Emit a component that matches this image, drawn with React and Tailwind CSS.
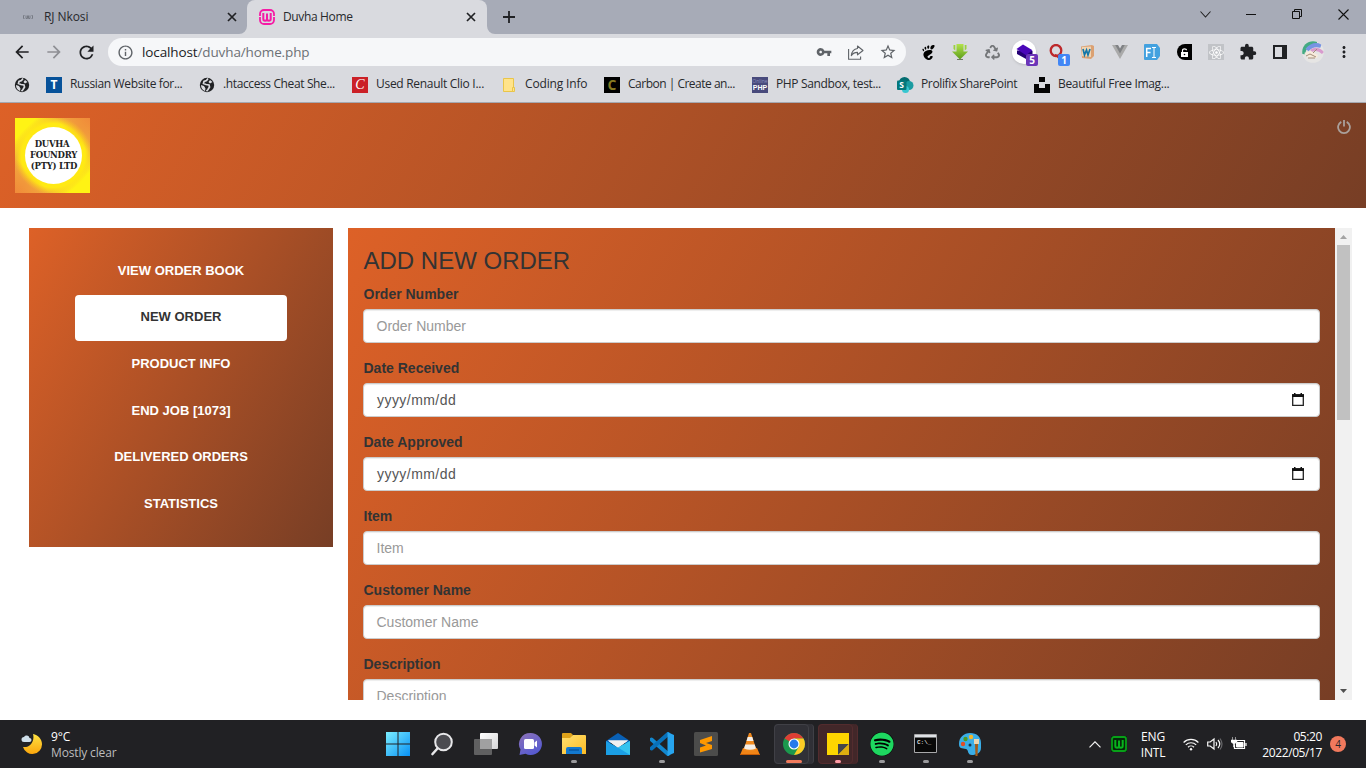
import React from "react";
import {
  MdArrowBack, MdArrowForward, MdRefresh, MdInfoOutline, MdVpnKey, MdStarBorder,
  MdExtension, MdMoreVert,
} from "react-icons/md";
import { FaSpotify, FaRecycle, FaReact } from "react-icons/fa";
import { SiGnome } from "react-icons/si";

const GRADIENT = "bg-[linear-gradient(120deg,#dd6127,#773e25)]";

function WampMark({ stroke, inner, size, radius = 4, notch = true }) {
  return (
    <svg width={size} height={size} viewBox="0 0 16 16" fill="none">
      <rect x="1" y="1" width="14" height="14" rx={radius} stroke={stroke} strokeWidth="1.8" />
      <path d="M4.300 4v6q0 1.700 1.800 1.700T8 10V4.500M8 10q0 1.700 1.900 1.700T11.700 10V4" stroke={inner} strokeWidth="2" />
      {notch && <path d="M0 7.500h2.200M13.800 7.500H16" stroke="#e6dce4" strokeWidth="1" />}
    </svg>
  );
}

function Globe() {
  return (
    <svg width="16" height="16" viewBox="0 0 16 16">
      <circle cx="8" cy="8" r="7.200" fill="#202124" />
      <path d="M9 1.500L7.500 3.500 5 4.500 4.500 6.500 7 7.500 10 8 10.500 10 9 12.500 7.500 14.300" fill="none" stroke="#d9dadf" strokeWidth="1.700" />
      <path d="M2 8l3 1 1.500 2.500-.5 2.500A6.300 6.300 0 0 1 2 8M11 3l2.500 2-2.500 1.500L9.500 5z" fill="#d9dadf" />
    </svg>
  );
}

function CloseIcon() {
  return (
    <svg width="10" height="10" viewBox="0 0 10 10" stroke="#202124" strokeWidth="1.700">
      <path d="M1 1l8 8M9 1L1 9" />
    </svg>
  );
}

function TabStrip() {
  return (
    <div className="flex h-[34px] bg-[#a7abb7] text-[#27292d]">
      <div className="flex w-[247px] items-center pl-[23px] pr-[10px]">
        <svg width="10" height="5" viewBox="0 0 10 5" fill="none" stroke="#777b84" strokeWidth="1">
          <path d="M1.500.500h-1v3h1M3 .500v3h1.500v-3M5.500 .500v3H7v-3M8.500.500h1v3h-1" />
        </svg>
        <span className="ml-[11px] flex-1 whitespace-nowrap text-[12px] tracking-[-0.080px]">RJ Nkosi</span>
        <CloseIcon />
      </div>
      <div className="relative flex w-[240px] items-center rounded-t-lg bg-[#d9dadf] pl-3 pr-4">
        <svg className="absolute bottom-0 left-[-8px]" width="8" height="8"><path d="M8 0v8H0a8 8 0 0 0 8-8" fill="#d9dadf" /></svg>
        <svg className="absolute bottom-0 right-[-8px]" width="8" height="8"><path d="M0 0v8h8a8 8 0 0 1-8-8" fill="#d9dadf" /></svg>
        <WampMark stroke="#f51ba5" inner="#f51ba5" size={16} />
        <span className="ml-2 flex-1 whitespace-nowrap text-[12px] tracking-[-0.350px]">Duvha Home</span>
        <span className="-mr-[5px]"><CloseIcon /></span>
      </div>
      <div className="flex w-11 items-center justify-center">
        <svg width="12" height="12" stroke="#202124" strokeWidth="1.800"><path d="M6 0v12M0 6h12" /></svg>
      </div>
      <div className="ml-auto flex h-7 items-center text-black">
        <div className="flex w-[46px] justify-center">
          <svg width="11" height="7" fill="none" stroke="#222" strokeWidth="1.100"><path d="M.5.500l5 5.500 5-5.500" /></svg>
        </div>
        <div className="flex w-[46px] justify-center">
          <svg width="10" height="1"><rect width="10" height="1" fill="#111" /></svg>
        </div>
        <div className="flex w-[46px] justify-center">
          <svg width="10" height="10" fill="none" stroke="#111"><path d="M.5 2.500h7v7h-7zM2.500 2.500v-2h7v7h-2" /></svg>
        </div>
        <div className="flex w-[46px] justify-center">
          <svg width="11" height="11" stroke="#111" strokeWidth="1.100"><path d="M.5.500l10 10M10.500.500l-10 10" /></svg>
        </div>
      </div>
    </div>
  );
}

function Cell({ children }) {
  return <div className="relative flex h-8 w-8 shrink-0 items-center justify-center">{children}</div>;
}

function Toolbar() {
  return (
    <div className="flex h-9 items-center bg-[#d9dadf] pl-[6px] text-[#202124]">
      <Cell><MdArrowBack size={20} /></Cell>
      <Cell><MdArrowForward size={20} className="text-[#8e8f94]" /></Cell>
      <Cell><MdRefresh size={21} /></Cell>
      <div className="ml-[6px] flex h-7 w-[798px] items-center rounded-full bg-[#f6f7f9] text-[#5f6368]">
        <MdInfoOutline size={17} className="ml-[9px]" />
        <span className="ml-2 flex-1 whitespace-nowrap text-[13.500px] tracking-[-0.120px] text-[#6c7075]">
          <span className="text-[#202124]">localhost</span>/duvha/home.php
        </span>
        <div className="flex w-8 justify-center"><MdVpnKey size={16} /></div>
        <div className="flex w-8 justify-center">
          <svg width="16" height="15" viewBox="0 0 16 15" fill="none" stroke="#5f6368" strokeWidth="1.100">
            <path d="M.6 4v10.200h12V11.500" />
            <path d="M9.500 1l5.500 4.500-5.500 4.300V7.400C6.500 7.400 4.800 8.300 3.300 10.600 3.800 6.500 6 4 9.500 3.500z" strokeLinejoin="round" />
          </svg>
        </div>
        <div className="mr-[2px] flex w-8 justify-center"><MdStarBorder size={18} /></div>
      </div>
      <div className="ml-[6px] flex items-center">
        <Cell><SiGnome size={15} className="text-black" /></Cell>
        <Cell>
          <svg width="16" height="16" viewBox="0 0 16 16">
            <defs><linearGradient id="dl" x2="0" y2="1"><stop stopColor="#b3e34a" /><stop offset="1" stopColor="#5b9c1b" /></linearGradient></defs>
            <path d="M4.500 0h7v7.500H16L8 15.500 0 7.500h4.500z" fill="url(#dl)" />
            <path d="M1.500 1h1.800v5.500L1.500 5zM14.500 1h-1.800v5.500L14.500 5z" fill="#9bd13f" />
            <path d="M5 15.500h6" stroke="#6d7a60" />
          </svg>
        </Cell>
        <Cell><FaRecycle size={15} className="text-[#747679]" /></Cell>
        <Cell>
          <div className="flex h-6 w-6 items-center justify-center rounded-full bg-white shadow">
            <svg width="17" height="16" viewBox="0 0 17 16">
              <path d="M1 6.500v3.500L11 15.500l5.500-4V7z" fill="#240075" />
              <path d="M7 .500l9.500 5.800-6.500 5L.500 5z" fill="#4a07b8" />
            </svg>
          </div>
          <span className="absolute left-[18px] top-[18px] flex h-3 w-3 items-center justify-center rounded-[2px] bg-[#6b35b8] text-[10px] font-bold text-white">5</span>
        </Cell>
        <Cell>
          <svg width="15" height="16" viewBox="0 0 15 16" fill="none" stroke="#bd282b">
            <ellipse cx="7" cy="6.500" rx="5.300" ry="5.500" strokeWidth="2.300" /><path d="M6 11q2 0 3 2t4 1.500" strokeWidth="2" />
          </svg>
          <span className="absolute left-[18px] top-[18px] flex h-3 w-3 items-center justify-center rounded-[2px] bg-[#4286f5] text-[10px] font-bold text-white">1</span>
        </Cell>
        <Cell>
          <svg width="14" height="14" viewBox="0 0 14 14">
            <path d="M0 1.500L11 0l2 1v10l-3 3-9-1z" fill="#dba173" /><path d="M1 2l9-.5V12L1 11z" fill="#f0d4b2" />
            <path d="M2 4l1.500 6L5.500 5 7 10l2-6" fill="none" stroke="#1477a9" strokeWidth="1.700" />
          </svg>
        </Cell>
        <Cell>
          <svg width="16" height="14" viewBox="0 0 16 14"><path d="M0 0h4l4 7 4-7h4L8 14z" fill="#aaa" /><path d="M3.200 0H6l2 3.500L10 0h2.800L8 8.500z" fill="#808285" /></svg>
        </Cell>
        <Cell>
          <svg width="16" height="16" viewBox="0 0 16 16" fill="none" stroke="#fff">
            <path d="M0 1q0-1 1-1h12l3 4v8l-3 4H1q-1 0-1-1z" fill="#43a1df" stroke="none" />
            <path d="M2.700 13V4.500H7M2.700 8.500h3.800" strokeWidth="1.500" /><path d="M8 3.500h4M8 13.500h4M10 3.500v10" />
          </svg>
        </Cell>
        <Cell>
          <div className="flex h-4 w-[15px] items-center justify-center rounded-l-full bg-black">
            <svg width="7" height="9" viewBox="0 0 7 9"><path d="M0 4h7v5H0z" fill="#fff" /><path d="M1.500 4V2.500q0-1.700 2-1.700t2 1.500" fill="none" stroke="#fff" strokeWidth="1.200" /><circle cx="3.500" cy="6.500" r=".8" /></svg>
          </div>
        </Cell>
        <Cell>
          <div className="flex h-4 w-4 items-center justify-center bg-[#c1c3c7] text-white"><FaReact size={15} /></div>
        </Cell>
        <Cell><MdExtension size={18} /></Cell>
        <Cell>
          <svg width="14" height="14"><rect x="1" y="1" width="12" height="12" fill="none" stroke="#202124" strokeWidth="2" /><path d="M9 0h5v14H9z" fill="#202124" /></svg>
        </Cell>
        <div className="flex w-[34px] justify-center">
          <svg width="22" height="22" viewBox="0 0 22 22">
            <defs><clipPath id="av"><circle cx="11" cy="11" r="10.800" /></clipPath></defs>
            <g clipPath="url(#av)" fill="none">
              <path d="M0 0h22v22H0z" fill="#e6e5e4" />
              <path d="M0 13C1 4 8 1 15 1" stroke="#43aa83" strokeWidth="6" />
              <path d="M5 9q6-7 14-4" stroke="#7794e3" strokeWidth="4" />
              <path d="M9 10q6-4 12 2" stroke="#d89bce" strokeWidth="3" />
              <path d="M2 12l7-2 7 4-1 3H6l-1-3z" fill="#f7ebdc" />
              <path d="M4 15l4-2 6 3M11 12l4-4M6 17h7" stroke="#a48e79" strokeWidth="1" />
            </g>
          </svg>
        </div>
        <div className="flex w-7 justify-center"><MdMoreVert size={18} /></div>
      </div>
    </div>
  );
}

function Bookmark({ width, icon, gap = "gap-2", track = "tracking-[-0.350px]", children }) {
  return (
    <div className={`flex shrink-0 items-center whitespace-nowrap ${width} ${gap}`}>
      {icon}
      <span className={`-mt-px ${track}`}>{children}</span>
    </div>
  );
}

function Bookmarks() {
  return (
    <div className="flex h-[33px] items-center border-b border-[#a5a8b0] bg-[#d9dadf] pb-[3px] pl-[14px] text-[12px] text-[#27292d]">
      <Bookmark width="w-8" icon={<Globe />} />
      <Bookmark width="w-[153px]" icon={<span className="flex h-4 w-4 items-center justify-center bg-[#07529a] text-[12px] font-bold text-white">T</span>}>Russian Website for...</Bookmark>
      <Bookmark width="w-[153px]" track="tracking-[-0.380px]" icon={<Globe />}>.htaccess Cheat She...</Bookmark>
      <Bookmark width="w-[150px]" track="tracking-[-0.290px]" icon={<span className="flex h-4 w-4 items-center justify-center bg-[#cb2027] font-['Liberation_Serif',serif] text-[14px] italic text-white">C</span>}>Used Renault Clio I...</Bookmark>
      <Bookmark
        width="w-[102px]"
        gap="gap-[9px]"
        track="tracking-[-0.160px]"
        icon={<svg width="14" height="16" fill="#ffe38a" stroke="#e9c549"><path d="M1.500 1.500h10v13h-10z" /><path d="M10.500 10.500h2v4h-2z" /></svg>}
      >Coding Info</Bookmark>
      <Bookmark width="w-[148px]" track="tracking-[-0.500px]" icon={<span className="flex h-4 w-4 items-center justify-center bg-black text-[14px] font-bold text-[#857a22]">C</span>}>Carbon | Create an...</Bookmark>
      <Bookmark
        width="w-[145px]"
        icon={
          <span className="flex h-4 w-4 flex-col items-center justify-center overflow-hidden bg-[#484a7c]">
            <span className="text-[5px] leading-[6px] text-[#8a8dbd]">Online</span>
            <span className="font-['Liberation_Sans',sans-serif] text-[7px] leading-[7px] font-bold text-white">PHP</span>
          </span>
        }
      >PHP Sandbox, test...</Bookmark>
      <Bookmark
        width="w-[137px]"
        gap="gap-[7px]"
        track="tracking-[-0.370px]"
        icon={
          <svg width="17" height="16" viewBox="0 0 17 16">
            <circle cx="7.500" cy="5.500" r="5.500" fill="#036c70" /><circle cx="12" cy="8.500" r="4.500" fill="#1a9ba1" /><circle cx="8.500" cy="12.500" r="3.500" fill="#37c6d0" />
            <rect y="3.500" width="9.500" height="9.500" rx="1" fill="#03787c" />
            <text x="4.700" y="11.300" textAnchor="middle" fontSize="8.500" fontWeight="700" fill="#fff" fontFamily="Open Sans">S</text>
          </svg>
        }
      >Prolifix SharePoint</Bookmark>
      <Bookmark width="w-[140px]" track="tracking-[-0.310px]" icon={<svg width="16" height="16"><path d="M5 0h6v5H5zM0 7h5v4h6V7h5v9H0z" fill="#050505" /></svg>}>Beautiful Free Imag...</Bookmark>
    </div>
  );
}

function CompanyLogo() {
  return (
    <div className="flex h-[75px] w-[75px] items-center justify-center bg-[radial-gradient(circle_at_51%_50%,#fff20f_0,#ffe914_32px,transparent_39px),linear-gradient(135deg,#fff314_14%,#f2b03c_27%,#f2a33c_50%,#f2b03c_73%,#fff314_86%)]">
      <div className="flex h-[75px] w-[75px] items-center justify-center bg-[linear-gradient(45deg,#f08a3a_0%,transparent_24%,transparent_76%,#f08a3a_100%)]">
        <div className="ml-[2px] flex h-[57px] w-[57px] flex-col items-center justify-center whitespace-nowrap rounded-full bg-white font-['DejaVu_Serif',serif] text-[8.500px] leading-[10.700px] font-bold tracking-[-0.270px] text-[#222]">
          <span className="-ml-[3px]">DUVHA</span>
          <span>FOUNDRY</span>
          <span className="ml-px">(PTY) LTD</span>
        </div>
      </div>
    </div>
  );
}

function AppHeader() {
  return (
    <header className={`flex h-[105px] items-start justify-between p-[15px] ${GRADIENT}`}>
      <CompanyLogo />
      <svg className="mt-[2px]" width="14" height="14" viewBox="0 0 14 14" fill="none" stroke="#aaa09b" strokeWidth="1.800">
        <path d="M4.300 1.900a5.900 5.900 0 1 0 5.400 0M7 0v6.500" />
      </svg>
    </header>
  );
}

const NAV = ["VIEW ORDER BOOK", "NEW ORDER", "PRODUCT INFO", "END JOB [1073]", "DELIVERED ORDERS", "STATISTICS"];

function SideNav() {
  return (
    <nav className={`flex h-[319px] w-[304px] shrink-0 flex-col items-center gap-[0.600px] pt-5 ${GRADIENT}`}>
      {NAV.map((label) => (
        <a
          key={label}
          className={`flex h-[46px] w-[212px] shrink-0 items-center justify-center rounded pb-px font-['Liberation_Sans',sans-serif] text-[13px] font-bold ${
            label === "NEW ORDER" ? "bg-white text-[#333]" : "text-white"
          }`}
        >
          {label}
        </a>
      ))}
    </nav>
  );
}

const FIELDS = [
  { label: "Order Number" },
  { label: "Date Received", date: true },
  { label: "Date Approved", date: true },
  { label: "Item" },
  { label: "Customer Name" },
  { label: "Description" },
];

function Field({ label, date }) {
  return (
    <div className="mb-[15px]">
      <div className="mb-[5px] pl-[0.500px] text-[14px] leading-5 font-bold">{label}</div>
      <div className="flex h-[34px] items-center justify-between rounded border border-[#ccc] bg-white px-3 text-[14px] shadow-[inset_0_1px_1px_rgba(0,0,0,0.075)]">
        {date ? <span className="pl-px tracking-[0.450px] text-[#555]">yyyy/mm/dd</span> : <span className="pl-[0.500px] text-[#999]">{label}</span>}
        {date && (
          <svg className="mr-[3px] mb-px" width="12" height="13" viewBox="0 0 12 13">
            <path d="M.7 2h10.600v10.300H.700z" fill="none" stroke="#222" strokeWidth="1.300" />
            <path d="M0 1.200h12V4H0zM2 0h1.500v2H2zM8.500 0H10v2H8.500z" fill="#111" />
          </svg>
        )}
      </div>
    </div>
  );
}

function OrderForm() {
  return (
    <main className="flex h-[472px] w-[1004px] overflow-hidden font-['Liberation_Sans',sans-serif] text-[#333]">
      <section className={`w-[987px] overflow-hidden px-[15px] ${GRADIENT}`}>
        <h3 className="mt-5 mb-[10px] pl-[0.500px] text-[24px] leading-[26.400px]">ADD NEW ORDER</h3>
        {FIELDS.map((f) => <Field key={f.label} {...f} />)}
      </section>
      <div className="flex w-[17px] flex-col items-center bg-[#f1f1f1]">
        <div className="flex h-[17px] items-center"><svg width="7" height="4"><path d="M0 4l3.500-4L7 4z" fill="#a3a3a3" /></svg></div>
        <div className="h-[175px] w-[13px] bg-[#c1c1c1]" />
        <div className="mt-auto flex h-[17px] items-center pb-px"><svg width="7" height="4"><path d="M0 0l3.500 4L7 0z" fill="#505050" /></svg></div>
      </div>
    </main>
  );
}

function TaskCell({ children, dot, tile }) {
  return (
    <div className="relative flex h-12 w-11 shrink-0 items-center justify-center">
      {tile && <div className={`absolute left-[2px] top-1 h-10 w-10 rounded border-r ${tile}`} />}
      {tile && <div className={`absolute left-[2px] top-1 h-10 w-[35px] rounded border ${tile}`} />}
      <div className="relative">{children}</div>
      {dot && <div className={`absolute top-10 left-1/2 h-[3px] -translate-x-1/2 rounded-full ${dot}`} />}
    </div>
  );
}

const GREY_DOT = "w-[6px] bg-[#9a9a9d]";

function TaskApps() {
  return (
    <div className="flex">
      <TaskCell>
        <svg width="24" height="24" viewBox="0 0 24 24">
          <defs><linearGradient id="win" x2="1" y2="1"><stop stopColor="#7beeff" /><stop offset="1" stopColor="#0890f4" /></linearGradient></defs>
          <path d="M0 0h11.500v11.500H0zM12.500 0H24v11.500H12.500zM0 12.500h11.500V24H0zM12.500 12.500H24V24H12.500z" fill="url(#win)" />
        </svg>
      </TaskCell>
      <TaskCell>
        <svg width="24" height="24" viewBox="0 0 24 24" fill="none" stroke="#e7e7e9">
          <circle cx="13.500" cy="10" r="8.300" fill="#4b4b50" strokeWidth="2" /><path d="M7.500 16.500L2.500 22" strokeWidth="2.600" strokeLinecap="round" />
        </svg>
      </TaskCell>
      <TaskCell>
        <svg width="24" height="24" viewBox="0 0 24 24">
          <defs><linearGradient id="tv" x2="1" y2="1"><stop stopColor="#fff" /><stop offset="1" stopColor="#d5d5d7" /></linearGradient></defs>
          <rect x="6" y="1" width="18" height="16" rx="1" fill="url(#tv)" /><rect y="7" width="18" height="16" rx="1" fill="#606061" /><path d="M6 7h12v10H6z" fill="#a0a0a1" />
        </svg>
      </TaskCell>
      <TaskCell>
        <svg width="24" height="24" viewBox="0 0 24 24">
          <defs><linearGradient id="chat" x2=".6" y2="1"><stop stopColor="#8d72b8" /><stop offset="1" stopColor="#565ad1" /></linearGradient></defs>
          <path d="M12.500 1a11.300 11 0 1 1-5 20.800L1.500 23l1-5.500A11.300 11 0 0 1 12.500 1" fill="url(#chat)" />
          <rect x="6" y="7" width="10" height="10" rx="1.500" fill="#fff" /><path d="M16.500 10.500l2.500-2v7l-2.500-2z" fill="#fff" />
        </svg>
      </TaskCell>
      <TaskCell dot={GREY_DOT}>
        <svg width="24" height="24" viewBox="0 0 24 24">
          <defs><linearGradient id="fold" x2="1" y2="1"><stop stopColor="#ffe071" /><stop offset="1" stopColor="#fdbc24" /></linearGradient></defs>
          <path d="M0 2q0-1 1-1h8l2 2-2 3H0z" fill="#dea21a" /><path d="M0 6h8l3-3h12q1 0 1 1v18H0z" fill="url(#fold)" />
          <path d="M4 22v-5q0-2 2-2h12q2 0 2 2v5z" fill="#1379cf" /><path d="M7 18h10" stroke="#0759a4" strokeWidth="1.500" />
        </svg>
      </TaskCell>
      <TaskCell>
        <svg width="24" height="24" viewBox="0 0 24 24">
          <path d="M0 9L12 1l12 8v2H0z" fill="#0960b5" /><path d="M2 8.500h20L12 16z" fill="#f1f1f1" /><path d="M0 9l12 6.500L24 9v14H0z" fill="#1b9fe5" /><path d="M12 15.500L24 9v14z" fill="#35c3ee" /><path d="M2 8.500h20L12 15.500z" fill="#f1f1f1" />
        </svg>
      </TaskCell>
      <TaskCell dot={GREY_DOT}>
        <svg width="24" height="24" viewBox="0 0 24 24">
          <path d="M1.500 7.500L18 22" stroke="#1287cf" strokeWidth="4" strokeLinecap="round" /><path d="M1.500 16.500L18 2" stroke="#0871ba" strokeWidth="4" strokeLinecap="round" /><path d="M17.500 0L24 3v18l-6.500 3z" fill="#27a5ef" />
        </svg>
      </TaskCell>
      <TaskCell>
        <svg width="24" height="24" viewBox="0 0 24 24"><rect width="24" height="24" rx="1.500" fill="#4c4c4b" /><path d="M18 4v5l-6 2 6 2v4L6 20.500v-5l6-2-6-2.500V8z" fill="#ff9800" /></svg>
      </TaskCell>
      <TaskCell>
        <svg width="22" height="24" viewBox="0 0 22 24">
          <path d="M4 16h14l3 7H1z" fill="#f18416" /><path d="M10 1h2l5.500 17q-6.500 3-13 0z" fill="#f18a1e" /><path d="M8.700 5h4.600l1.200 4H7.500zM6.300 12.500h9.400l1.300 4q-6 2.500-12 0z" fill="#f3eee7" /><path d="M1 22.500h20" stroke="#c65c06" />
        </svg>
      </TaskCell>
      <TaskCell dot="w-4 bg-[#f17b5d]" tile="border-[#404046] bg-[#303036]">
        <svg width="24" height="24" viewBox="0 0 24 24">
          <circle cx="12" cy="12" r="11" fill="#1b984d" /><path d="M12 12L2.500 6.500A11 11 0 0 1 21.500 6.500H12z" fill="#df3e35" /><path d="M12 6.500h9.500A11 11 0 0 1 12 23l4.800-8.200z" fill="#fbcb25" /><circle cx="12" cy="12" r="5.500" fill="#fff" /><circle cx="12" cy="12" r="4.400" fill="#2879eb" />
        </svg>
      </TaskCell>
      <TaskCell dot="w-[6px] bg-[#ff9ba6]" tile="border-[#532c2e] bg-[#422729]">
        <svg width="22" height="22" viewBox="0 0 22 22"><path d="M0 0h22v22H0z" fill="#fed500" /><path d="M11 22V11h11z" fill="#45454a" /><path d="M22 11v11H11z" fill="#e0ad10" /></svg>
      </TaskCell>
      <TaskCell dot={GREY_DOT}>
        <div className="rounded-full bg-black"><FaSpotify size={24} className="text-[#1ed760]" /></div>
      </TaskCell>
      <TaskCell dot={GREY_DOT}>
        <svg width="23" height="20" viewBox="0 0 23 20">
          <path d="M.5.500h22v18H.500z" fill="#080808" stroke="#a8a8aa" /><path d="M1 1h21v2.500H1z" fill="#dfe2e6" />
          <text x="3" y="9.500" fontFamily="Liberation Mono" fontSize="6" fontWeight="700" fill="#ddd">C:\_</text>
        </svg>
      </TaskCell>
      <TaskCell dot={GREY_DOT}>
        <svg width="24" height="24" viewBox="0 0 24 24">
          <path d="M12 1c7 0 11 4 11 10v5c0 5-5 7-9 7-5 0-3-5-6-6-4-1-7 0-7-5C1 5 6 1 12 1" fill="#3aaee7" />
          <circle cx="5" cy="12" r="2.200" fill="#e04e28" /><circle cx="7.500" cy="7" r="2.200" fill="#4e9a22" /><circle cx="13" cy="5" r="2.200" fill="#f4b629" /><circle cx="12" cy="13" r="1.500" fill="#17364d" />
          <path d="M16 7h5v5h-5z" fill="#e9d5b1" /><path d="M17 12h3l-.5 12h-2z" fill="#a35c19" />
        </svg>
      </TaskCell>
    </div>
  );
}

function Taskbar() {
  return (
    <footer className="flex h-12 shrink-0 items-center bg-[#212124] text-[12px] leading-4 text-white">
      <div className="flex w-[375.500px] items-center pl-[21px]">
        <svg width="21" height="20" viewBox="0 0 21 20">
          <defs><linearGradient id="moon" x2="0" y2="1"><stop stopColor="#ffe344" /><stop offset="1" stopColor="#fba60c" /></linearGradient></defs>
          <path d="M12 0c5 1 9 5 9 10a9.700 9.700 0 0 1-19 3c7 1 12-6 10-13" fill="url(#moon)" /><path d="M3 8a2.500 2.500 0 0 1 0-5 3 3 0 0 1 5.500 1A2 2 0 0 1 8.500 8z" fill="#cfdfea" />
        </svg>
        <div className="ml-[9px] mt-[2px] whitespace-nowrap text-[12px] tracking-[-0.150px]">
          <div>9°C</div>
          <div className="text-[#bdbdbd]">Mostly clear</div>
        </div>
      </div>
      <TaskApps />
      <div className="ml-auto flex items-center">
        <svg width="12" height="7" fill="none" stroke="#f4f4f4" strokeWidth="1.200"><path d="M.5 6.300L6 .800l5.500 5.500" /></svg>
        <div className="ml-[10px] h-4 w-4 bg-[#05260a]"><WampMark stroke="#08a018" inner="#08b31c" size={16} radius={2} notch={false} /></div>
        <div className="ml-[10px] mt-[2px] w-8 text-center text-[12px] tracking-[-0.200px]"><div>ENG</div><div>INTL</div></div>
        <svg className="ml-[14px]" width="16" height="13" viewBox="0 0 16 13" fill="none" stroke="#f7f7f7" strokeWidth="1.200">
          <path d="M.6 4.500a10.500 10.500 0 0 1 14.800 0M2.800 6.900a7.400 7.400 0 0 1 10.400 0M5 9.200a4.300 4.300 0 0 1 6 0" /><circle cx="8" cy="11.300" r="1.200" fill="#f7f7f7" stroke="none" />
        </svg>
        <svg className="ml-2" width="16" height="14" viewBox="0 0 16 14" fill="none" stroke="#f7f7f7" strokeWidth="1.200">
          <path d="M.7 5v4h2.500L7 12V2L3.200 5zM9 5q1.500 2 0 4M11 3q3.500 4 0 8" /><path d="M13 1.500q4 5.500 0 11" stroke="#67676a" />
        </svg>
        <svg className="ml-2" width="16" height="14" viewBox="0 0 16 14" fill="none" stroke="#fff">
          <path d="M5.500 3.500h8v8H3.500V7.500M15 6v3" strokeWidth="1.200" /><path d="M5.500 5.500H12V10H5.500z" fill="#fff" /><path d="M1.500 0v3M4.500 0v3M0 3h6v2L4 6.500H2L0 5zM2.500 6h1v4h-1z" fill="#fff" strokeWidth=".5" />
        </svg>
        <div className="ml-[14px] mt-[1px] flex w-[61px] flex-col items-end whitespace-nowrap text-[12px] tracking-[-0.400px]"><div>05:20</div><div>2022/05/17</div></div>
        <div className="ml-2 mr-5 flex h-4 w-4 items-center justify-center rounded-full bg-[#f1795d] text-[10px] text-[#26262a]">4</div>
      </div>
    </footer>
  );
}

export default function App() {
  return (
    <div className="flex h-[768px] w-[1366px] flex-col overflow-hidden bg-white font-['Open_Sans','Noto_Sans',sans-serif]">
      <TabStrip />
      <Toolbar />
      <Bookmarks />
      <AppHeader />
      <div className="flex flex-1 items-start gap-[15px] pt-5 pl-[29px]">
        <SideNav />
        <OrderForm />
      </div>
      <Taskbar />
    </div>
  );
}
